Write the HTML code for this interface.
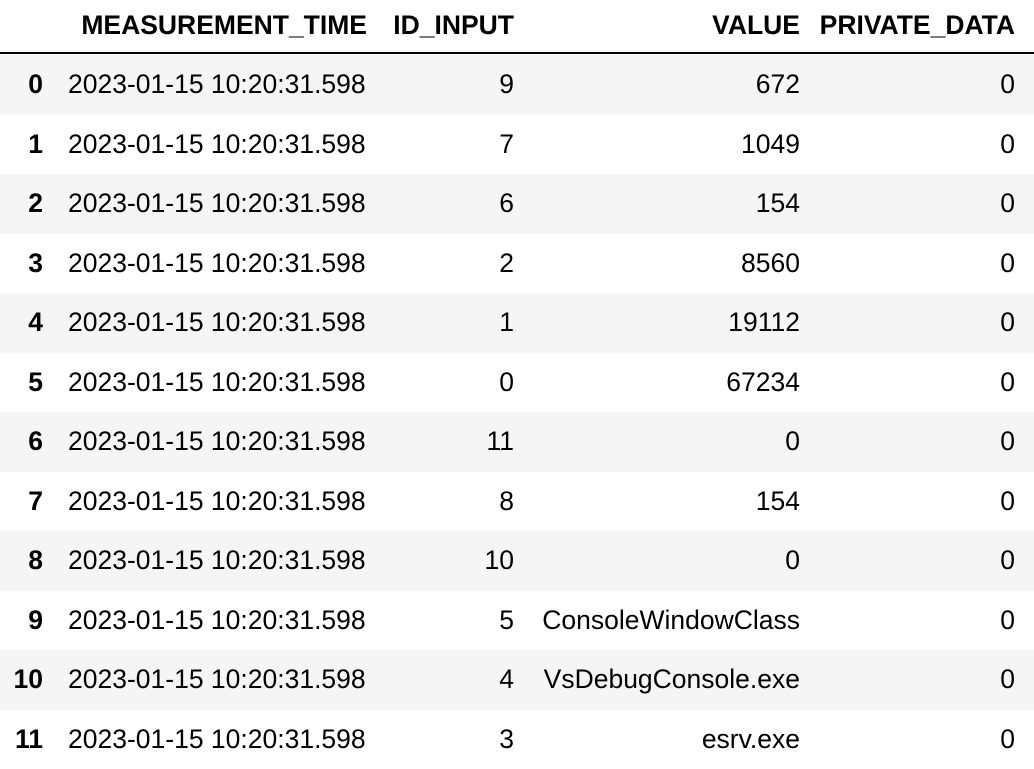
<!DOCTYPE html>
<html><head><style>
body{margin:0;width:1034px;height:760px;background:#fff;font-family:"Liberation Sans",Arial,sans-serif;font-size:26.5px;color:#000;position:relative;overflow:hidden}
.r{position:absolute;left:0;width:1034px;height:59.5px}
.s{background:#f5f5f5}
.c{position:absolute;top:0;height:100%;line-height:59.5px;white-space:nowrap}
.b{font-weight:bold}
.hdr{position:absolute;top:0;left:0;width:1034px;height:52px;border-bottom:2px solid #000}
.hdr .c{line-height:50px}
</style></head><body>
<div class="hdr">
<div class="c b" style="right:667px">MEASUREMENT_TIME</div>
<div class="c b" style="right:520px">ID_INPUT</div>
<div class="c b" style="right:234px">VALUE</div>
<div class="c b" style="right:19px">PRIVATE_DATA</div>
</div>
<div id="rows"></div>
<script>
var d=[[9,"672"],[7,"1049"],[6,"154"],[2,"8560"],[1,"19112"],[0,"67234"],[11,"0"],[8,"154"],[10,"0"],[5,"ConsoleWindowClass"],[4,"VsDebugConsole.exe"],[3,"esrv.exe"]];
var h="";
for(var i=0;i<d.length;i++){
h+='<div class="r'+(i%2==0?' s':'')+'" style="top:'+(55+i*59.5)+'px">'+
'<div class="c b" style="right:991px">'+i+'</div>'+
'<div class="c" style="left:68px">2023-01-15 10:20:31.598</div>'+
'<div class="c" style="right:520px">'+d[i][0]+'</div>'+
'<div class="c" style="right:234px">'+d[i][1]+'</div>'+
'<div class="c" style="right:19px">0</div></div>';
}
document.getElementById("rows").innerHTML=h;
</script>
</body></html>
